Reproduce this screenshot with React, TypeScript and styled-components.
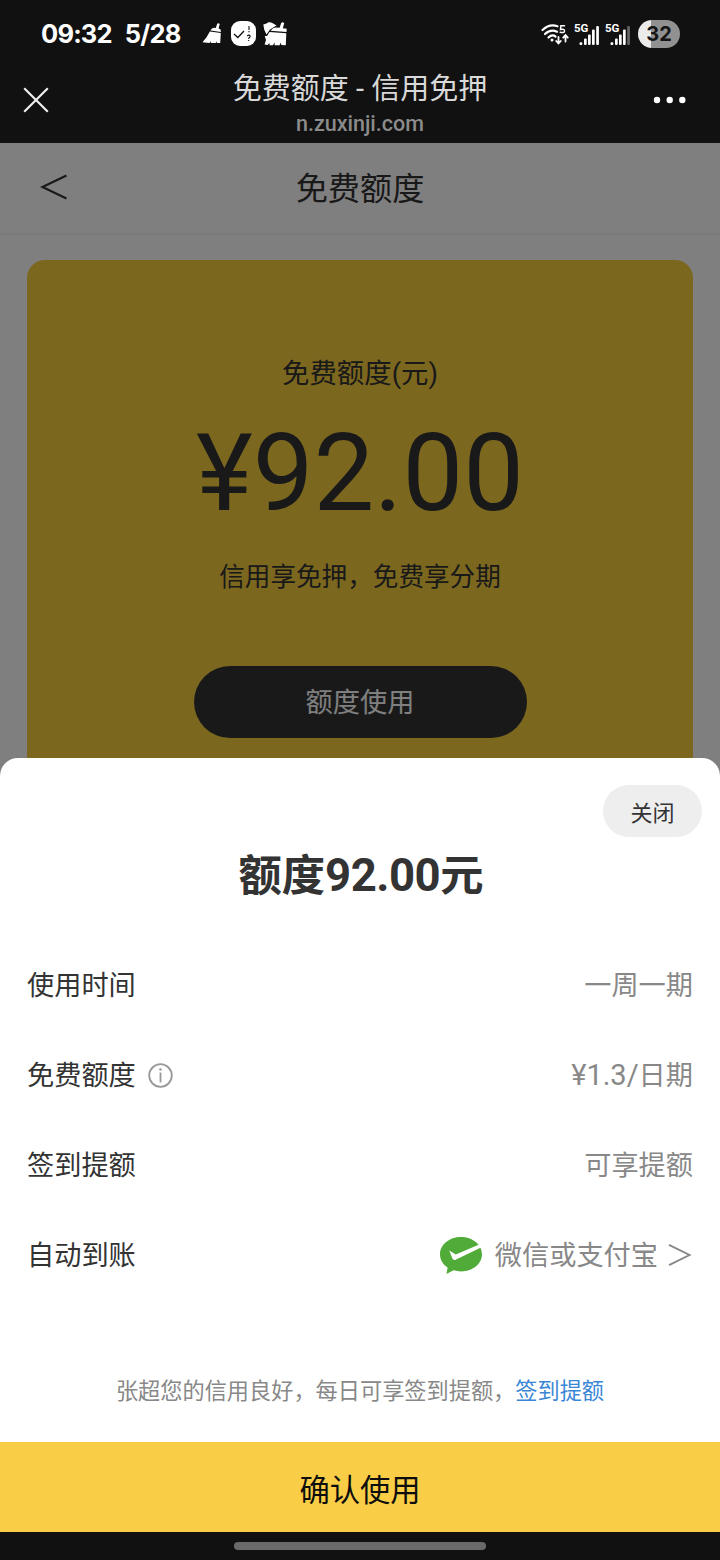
import React from "react";
import styled, { createGlobalStyle } from "styled-components";

const GlobalStyle = createGlobalStyle`
  body {
    margin: 0;
    background: #111;
    font-family: Roboto, "Noto Sans CJK SC", sans-serif;
    -webkit-font-smoothing: antialiased;
  }
  * { box-sizing: border-box; }
  button { font: inherit; border: 0; margin: 0; padding: 0; }
`;

const Screen = styled.main`
  width: 720px;
  height: 1560px;
  display: flex;
  flex-direction: column;
  overflow: hidden;
  background: #111;
`;

const StatusBar = styled.div`
  height: 68px;
  flex: none;
  display: flex;
  align-items: center;
  padding: 0 40px 0 41px;
  color: #fff;
`;

const Clock = styled.div`
  display: flex;
  gap: 13px;
  width: 161px;
  white-space: nowrap;
  font: 700 25.5px/68px Inter, sans-serif;
  letter-spacing: -0.8px;
`;

const Notices = styled.div`
  display: flex;
  align-items: center;
  flex: 1;
`;

const Signals = styled.div`
  display: flex;
  align-items: center;
`;

const Battery = styled.div`
  width: 42px;
  height: 28px;
  margin-left: 6px;
  border-radius: 14px;
  background: linear-gradient(90deg, #ebebeb 0 13px, #919191 13px);
  color: #151515;
  font: 700 20px/28px Inter, sans-serif;
  text-align: center;
`;

const BrowserBar = styled.header`
  height: 75px;
  flex: none;
  display: grid;
  grid-template-columns: 60px 1fr 60px;
  padding: 0 12px;
`;

const BarIcon = styled.button`
  height: 64px;
  display: flex;
  align-items: center;
  justify-content: center;
  background: none;
  &:first-child { width: 48px; }
  &:last-child { width: 60px; padding-right: 17px; }
`;

const PageTitle = styled.div`
  padding-top: 1px;
  text-align: center;
  color: #d9d9d9;
  font-size: 29px;
  line-height: 40px;
`;

const PageHost = styled.div`
  color: #8b8b8b;
  font-size: 21.5px;
  font-weight: 500;
  line-height: 30px;
`;

const Viewport = styled.section`
  position: relative;
  height: 1389px;
  flex: none;
  background: #fff;
  overflow: hidden;
`;

const TopNav = styled.div`
  height: 92px;
  display: grid;
  grid-template-columns: 60px 1fr 60px;
  align-items: center;
  padding: 0 27px 5px;
  border-bottom: 2px solid #f4f4f4;
  color: #333;
  font-size: 32.2px;
  text-align: center;
`;

const BackIcon = styled.svg`
  margin-top: 3px;
`;

const CreditCard = styled.div`
  margin: 25px 27px 0;
  height: 620px;
  border-radius: 18px;
  background: #f8ce3e;
  display: flex;
  flex-direction: column;
  align-items: center;
  color: #333;
`;

const CardLabel = styled.div`
  margin-top: 94px;
  font-size: 27.4px;
  line-height: 40px;
`;

const CardAmount = styled.div`
  margin-top: 16px;
  font-size: 108px;
  line-height: 126px;
`;

const CardNote = styled.div`
  margin-top: 21px;
  font-size: 25.6px;
  line-height: 40px;
`;

const CardButton = styled.button`
  margin-top: 69px;
  width: 333px;
  height: 72px;
  padding-bottom: 5px;
  border-radius: 36px;
  background: #333;
  color: #fff;
  font-size: 27.2px;
`;

const Mask = styled.div`
  position: absolute;
  inset: 0;
  background: rgba(0, 0, 0, 0.5);
`;

const Sheet = styled.div`
  position: absolute;
  left: 0;
  right: 0;
  bottom: 0;
  height: 774px;
  border-radius: 18px 18px 0 0;
  background: #fff;
  overflow: hidden;
  display: flex;
  flex-direction: column;
`;

const CloseButton = styled.button`
  align-self: flex-end;
  flex: none;
  margin: 27px 18px 0 0;
  width: 99px;
  height: 52px;
  border-radius: 26px;
  background: #eee;
  color: #333;
  font-size: 22px;
`;

const SheetTitle = styled.h1`
  margin: 9px 0 32px;
  padding-left: 2px;
  color: #333;
  font-size: 43.3px;
  font-weight: 700;
  line-height: 62px;
  text-align: center;
`;

const TitleAmount = styled.span`
  font-size: 45.5px;
  letter-spacing: -0.5px;
  line-height: 1;
`;

const Row = styled.div`
  height: 90px;
  flex: none;
  display: flex;
  align-items: center;
  justify-content: space-between;
  padding: 0 27px 4px;
  font-size: 27.2px;
`;

const RowLabel = styled.div`
  display: flex;
  align-items: center;
  gap: 12px;
  color: #333;

  svg { margin-top: 4px; }
`;

const RowValue = styled.div`
  display: flex;
  align-items: center;
  padding-top: 6px;
  color: #888;
  line-height: 40px;
`;

const Rate = styled.div`
  padding-top: 6px;
  color: #888;
  line-height: 40px;
`;

const RateAmount = styled.span`
  font-size: 29px;
  line-height: 1;
`;

const PayName = styled.span`
  margin: 0 10px 0 13px;
`;

const ChevronIcon = styled.svg`
  margin-top: -3px;
`;

const Footnote = styled.p`
  margin: 74px 0 0;
  color: #888;
  font-size: 22.2px;
  line-height: 34px;
  text-align: center;
`;

const FootLink = styled.a`
  color: #3a87d6;
`;

const ConfirmButton = styled.button`
  height: 90px;
  flex: none;
  margin-top: auto;
  padding-top: 2px;
  background: #f9cd46;
  color: #0d0d0d;
  font-size: 30.3px;
`;

const GestureBar = styled.div`
  height: 28px;
  flex: none;
  display: flex;
  justify-content: center;
  align-items: center;
`;

const GesturePill = styled.div`
  width: 252px;
  height: 8px;
  border-radius: 4px;
  background: #6a6a6a;
`;

const NoticeIcons = () => (
  <svg width="86" height="28" viewBox="202 20 86 28" fill="#fff">
    <path d="M210.500 30.500Q211.500 27.800 214 27.800L215.800 28 217.200 23.800Q218.600 22.700 219.700 24L218.600 28.600 220.600 29.600 220.900 32z" />
    <path d="M209.800 31.500L220.800 33 220.200 43H216.800L216.600 41 215.800 43H210.800L211 41 209.500 43 202.500 42.300Q206.800 38 209.800 31.500z" />
    <rect x="231" y="21" width="25" height="25" rx="9" />
    <path d="M234 34l3.800 3.500 6.200-6.500" fill="none" stroke="#111" strokeWidth="1.300" />
    <path d="M249 26v4M249 31v1.300M247.200 36q1.800-1.800 3 0 0 1.200-1.500 2.200v.8M248.700 40v1" fill="none" stroke="#111" strokeWidth="1.100" />
    <path d="M263.300 24.500Q266 24 268.500 22.300 271.500 21.800 274 24L276.500 25.500 270 29.500 266.500 34.500Q263.800 30.500 263.300 24.500z" />
    <path d="M270.500 30.800Q273 27.500 276 27.600L279.600 27.800 281.200 23Q282.800 21.600 284.200 23.200L282.800 28.200 286.700 28.800 286.500 32z" />
    <path d="M269.500 32L286.300 33.300 285.800 45.300 281.300 45 280.800 42.500 279.600 45.300H274.500L274.800 42.500 272.800 45.200H269.600L269.500 43 267.500 45 264.600 44.600 266 40 264.700 36 267 36z" />
  </svg>
);

const WifiIcon = () => (
  <svg width="30" height="24" viewBox="540 22 30 24" fill="none" stroke="#fff" strokeLinecap="round">
    <path d="M542.500 30Q549.500 23.500 557.500 26.300M545 34Q550.500 28.800 557 31.700M548.500 37.500Q552 34 555.500 36.500" strokeWidth="2.200" />
    <circle cx="552" cy="40" r="1.500" fill="#fff" stroke="none" />
    <path d="M564.500 25.700h-3.600l-.4 3.800q4-1 4 1.400t-4.300 1.400" strokeWidth="1.500" />
    <path d="M558.500 37v6m-2.300-2l2.300 2.400 2.300-2.400M565.500 41.500v-6m-2.300 2.200l2.300-2.500 2.300 2.500" strokeWidth="1.800" />
  </svg>
);

const SignalIcon = ({ weak = false }: { weak?: boolean }) => (
  <svg width="31" height="26" viewBox="0 0 31 26" fill="#fff">
    <text x="4" y="11" fontFamily="Roboto" fontSize="11.500" fontWeight="700">5G</text>
    <rect x="9.500" y="21.200" width="2.800" height="2.800" rx="1" />
    <rect x="14" y="17.500" width="2.700" height="6.500" rx="1" />
    <rect x="18" y="13.500" width="2.700" height="10.500" rx="1" />
    <rect x="22" y="8.500" width="2.700" height="15.500" rx="1" />
    <rect x="26.200" y="5" width="2.700" height="19" rx="1" fill={weak ? "#666" : "#fff"} />
  </svg>
);

const WechatPayIcon = () => (
  <svg width="42" height="38" viewBox="0 0 42 38">
    <path d="M21 0C9.400 0 0 7.600 0 17.200c0 5.400 3 10.200 7.600 13.300L6.500 37l7-3.700c2.400.7 4.900 1.100 7.500 1.100 11.600 0 21-7.600 21-17.200S32.600 0 21 0z" fill="#51ab38" />
    <path d="M9.300 13.600L15.800 17.400 38.600 7.700 41 10.500 15.600 22.800Q13.200 23.600 12.200 21z" fill="#fff" />
  </svg>
);

export default function App() {
  return (
    <>
      <GlobalStyle />
      <Screen>
        <StatusBar>
          <Clock>
            <span>09:32</span>
            <span>5/28</span>
          </Clock>
          <Notices><NoticeIcons /></Notices>
          <Signals>
            <WifiIcon />
            <SignalIcon />
            <SignalIcon weak />
            <Battery>32</Battery>
          </Signals>
        </StatusBar>
        <BrowserBar>
          <BarIcon aria-label="关闭网页">
            <svg width="26" height="26" viewBox="0 0 26 26" fill="none" stroke="#eee" strokeWidth="2.200">
              <path d="M1.200 1.200l23.600 23.600M24.800 1.200L1.200 24.800" />
            </svg>
          </BarIcon>
          <PageTitle>
            免费额度 - 信用免押
            <PageHost>n.zuxinji.com</PageHost>
          </PageTitle>
          <BarIcon aria-label="更多">
            <svg width="34" height="8" viewBox="0 0 34 8" fill="#fff">
              <circle cx="4" cy="4" r="3.200" />
              <circle cx="16.700" cy="4" r="3.200" />
              <circle cx="29.300" cy="4" r="3.200" />
            </svg>
          </BarIcon>
        </BrowserBar>
        <Viewport>
          <TopNav>
            <BackIcon width="54" height="28" viewBox="0 0 54 28" fill="none" stroke="#333" strokeWidth="2.200">
              <path d="M39.500 2.500L15.500 14l24 11.500" />
            </BackIcon>
            <span>免费额度</span>
          </TopNav>
          <CreditCard>
            <CardLabel>免费额度(元)</CardLabel>
            <CardAmount>¥92.00</CardAmount>
            <CardNote>信用享免押，免费享分期</CardNote>
            <CardButton>额度使用</CardButton>
          </CreditCard>
          <Mask />
          <Sheet>
            <CloseButton>关闭</CloseButton>
            <SheetTitle>额度<TitleAmount>92.00</TitleAmount>元</SheetTitle>
            <Row>
              <RowLabel>使用时间</RowLabel>
              <RowValue>一周一期</RowValue>
            </Row>
            <Row>
              <RowLabel>
                免费额度
                <svg width="25" height="25" viewBox="0 0 25 25" fill="none" stroke="#999" strokeWidth="1.800">
                  <circle cx="12.500" cy="12.500" r="11.300" />
                  <path d="M12.500 9.500v10" />
                  <circle cx="12.500" cy="6.500" r="1.300" fill="#999" stroke="none" />
                </svg>
              </RowLabel>
              <Rate><RateAmount>¥1.3/</RateAmount>日期</Rate>
            </Row>
            <Row>
              <RowLabel>签到提额</RowLabel>
              <RowValue>可享提额</RowValue>
            </Row>
            <Row>
              <RowLabel>自动到账</RowLabel>
              <RowValue>
                <WechatPayIcon />
                <PayName>微信或支付宝</PayName>
                <ChevronIcon width="25" height="24" viewBox="0 0 25 24" fill="none" stroke="#888" strokeWidth="1.900">
                  <path d="M1 1.800L21.500 12 1 22.200" />
                </ChevronIcon>
              </RowValue>
            </Row>
            <Footnote>
              张超您的信用良好，每日可享签到提额，<FootLink>签到提额</FootLink>
            </Footnote>
            <ConfirmButton>确认使用</ConfirmButton>
          </Sheet>
        </Viewport>
        <GestureBar><GesturePill /></GestureBar>
      </Screen>
    </>
  );
}
